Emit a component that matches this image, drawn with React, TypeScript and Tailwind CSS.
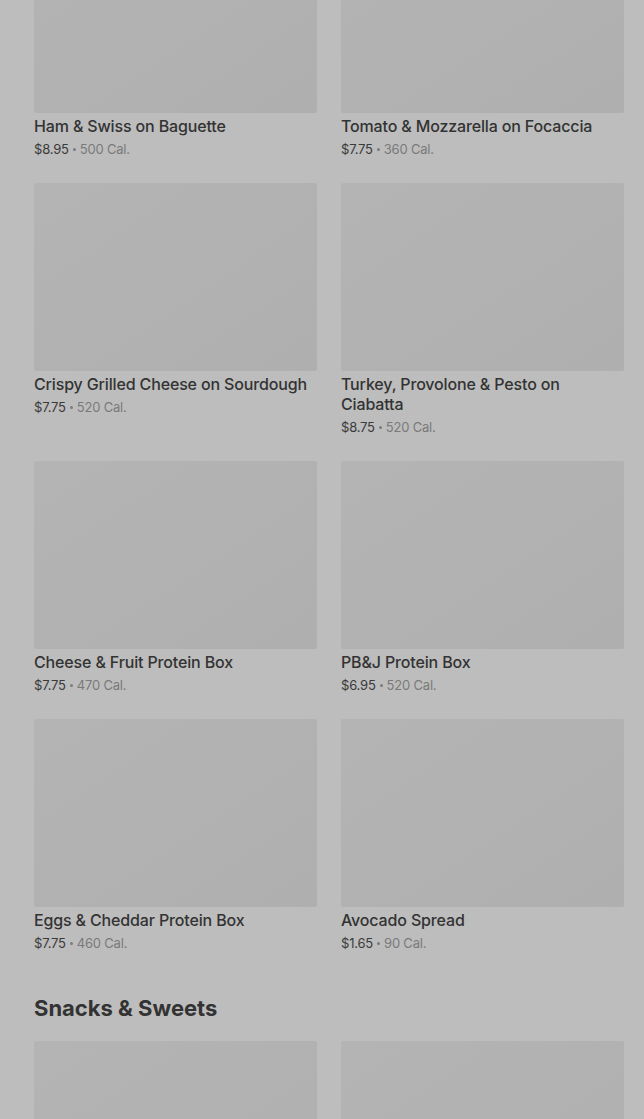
import React from "react";

type Item = { name: string; price: string; cal: string };

const rows: Item[][] = [
  [
    { name: "Ham & Swiss on Baguette", price: "$8.95", cal: "500 Cal." },
    { name: "Tomato & Mozzarella on Focaccia", price: "$7.75", cal: "360 Cal." },
  ],
  [
    { name: "Crispy Grilled Cheese on Sourdough", price: "$7.75", cal: "520 Cal." },
    { name: "Turkey, Provolone & Pesto on Ciabatta", price: "$8.75", cal: "520 Cal." },
  ],
  [
    { name: "Cheese & Fruit Protein Box", price: "$7.75", cal: "470 Cal." },
    { name: "PB&J Protein Box", price: "$6.95", cal: "520 Cal." },
  ],
  [
    { name: "Eggs & Cheddar Protein Box", price: "$7.75", cal: "460 Cal." },
    { name: "Avocado Spread", price: "$1.65", cal: "90 Cal." },
  ],
];

function Card({ item }: { item: Item }) {
  return (
    <div className="flex flex-col">
      <div className="h-[188px] rounded-[2px] bg-gradient-to-br from-[#b4b4b4] to-[#afafaf]" />
      <div className="mt-[3px] text-[16px] leading-[20px] font-medium tracking-[-0.15px] text-[#333333]">
        {item.name}
      </div>
      <div className="mt-[4px] flex h-[18px] items-center text-[13px] leading-[18px] tracking-[-0.2px]">
        <span className="text-[#3a3a3a]">{item.price}</span>
        <span className="mx-[4px] inline-block h-[3px] w-[3px] rounded-full bg-[#7a7a7a]" />
        <span className="text-[#7a7a7a]">{item.cal}</span>
      </div>
    </div>
  );
}

export default function App() {
  return (
    <div
      className="h-[1119px] overflow-hidden bg-[#bdbdbd] pl-[34px] pr-[20px]"
      style={{ fontFamily: "Inter, 'Noto Sans', sans-serif" }}
    >
      <div className="mt-[-75px] grid grid-cols-2 gap-x-[24px] gap-y-[25px]">
        {rows.flat().map((it) => (
          <Card key={it.name} item={it} />
        ))}
      </div>
      <h2 className="mt-[42px] mb-[19px] text-[22px] leading-[28px] font-bold text-[#333333]">
        Snacks &amp; Sweets
      </h2>
      <div className="grid grid-cols-2 gap-x-[24px]">
        <div className="h-[188px] rounded-[2px] bg-gradient-to-br from-[#b4b4b4] to-[#afafaf]" />
        <div className="h-[188px] rounded-[2px] bg-gradient-to-br from-[#b4b4b4] to-[#afafaf]" />
      </div>
    </div>
  );
}
